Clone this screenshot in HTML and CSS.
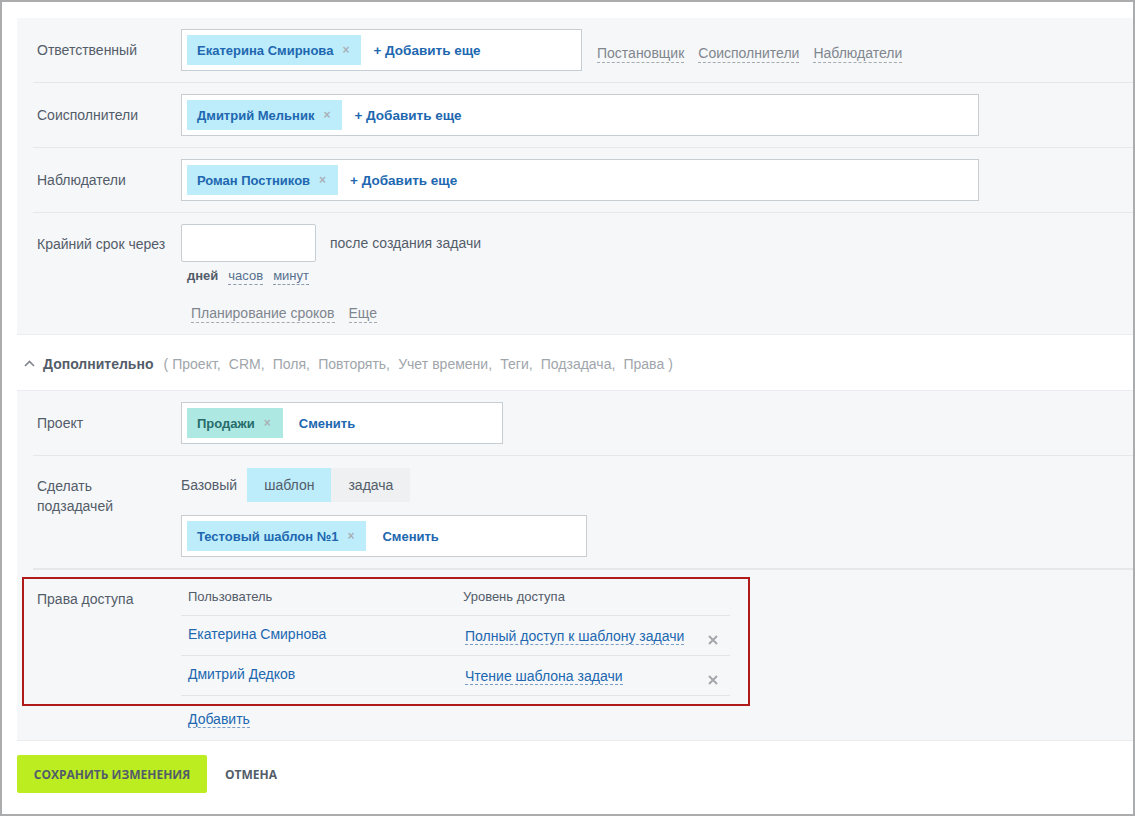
FILE: index.html
```html
<!DOCTYPE html>
<html lang="ru">
<head>
<meta charset="utf-8">
<title>Шаблон задачи</title>
<link rel="stylesheet" href="styles.css">
</head>
<body>
<div class="frame">
  <div class="panel">
    <div class="row">
      <div class="label">Ответственный</div>
      <div class="picker w400">
        <span class="tag">Екатерина Смирнова<span class="tag-x">×</span></span>
        <span class="add">+ Добавить еще</span>
      </div>
      <div class="role-links">
        <span class="dlink">Постановщик</span>
        <span class="dlink">Соисполнители</span>
        <span class="dlink">Наблюдатели</span>
      </div>
    </div>
    <div class="row">
      <div class="label">Соисполнители</div>
      <div class="picker w797">
        <span class="tag">Дмитрий Мельник<span class="tag-x">×</span></span>
        <span class="add">+ Добавить еще</span>
      </div>
    </div>
    <div class="row">
      <div class="label">Наблюдатели</div>
      <div class="picker w797">
        <span class="tag">Роман Постников<span class="tag-x">×</span></span>
        <span class="add">+ Добавить еще</span>
      </div>
    </div>
    <div class="row row-deadline">
      <div class="label label-deadline">Крайний срок через</div>
      <div class="deadline">
        <div class="deadline-line">
          <div class="num-input"></div>
          <span class="after">после создания задачи</span>
        </div>
        <div class="units">
          <span class="unit-active">дней</span>
          <span class="unit">часов</span>
          <span class="unit">минут</span>
        </div>
        <div class="plan-links">
          <span class="dlink">Планирование сроков</span>
          <span class="dlink">Еще</span>
        </div>
      </div>
    </div>
  </div>

  <div class="more-header">
    <svg class="chev" width="11" height="7" viewBox="0 0 11 7"><path d="M1 6 L5.5 1.5 L10 6" fill="none" stroke="#80868e" stroke-width="1.6"/></svg>
    <span class="more-title">Дополнительно</span>
    <span class="more-list">( Проект,&nbsp; CRM,&nbsp; Поля,&nbsp; Повторять,&nbsp; Учет времени,&nbsp; Теги,&nbsp; Подзадача,&nbsp; Права )</span>
  </div>

  <div class="panel panel2">
    <div class="row">
      <div class="label">Проект</div>
      <div class="picker w321">
        <span class="tag tag-teal">Продажи<span class="tag-x">×</span></span>
        <span class="change">Сменить</span>
      </div>
    </div>
    <div class="row row-sub">
      <div class="label label-sub">Сделать<br>подзадачей</div>
      <div class="sub">
        <div class="switch">
          <span class="switch-label">Базовый</span>
          <span class="seg seg-on">шаблон</span>
          <span class="seg">задача</span>
        </div>
        <div class="picker w405">
          <span class="tag">Тестовый шаблон №1<span class="tag-x">×</span></span>
          <span class="change">Сменить</span>
        </div>
      </div>
    </div>
    <div class="rights">
      <div class="rights-box">
        <div class="rights-label">Права доступа</div>
        <div class="rights-table">
          <div class="rt-row rt-head">
            <span class="rt-user">Пользователь</span>
            <span class="rt-level">Уровень доступа</span>
          </div>
          <div class="rt-row">
            <span class="rt-user user-link">Екатерина Смирнова</span>
            <span class="rt-level"><span class="level-link">Полный доступ к шаблону задачи</span></span>
            <svg class="rt-del" width="10" height="10" viewBox="0 0 10 10"><path d="M1 1 L9 9 M9 1 L1 9" stroke="#a3a8ae" stroke-width="2"/></svg>
          </div>
          <div class="rt-row">
            <span class="rt-user user-link">Дмитрий Дедков</span>
            <span class="rt-level"><span class="level-link">Чтение шаблона задачи</span></span>
            <svg class="rt-del" width="10" height="10" viewBox="0 0 10 10"><path d="M1 1 L9 9 M9 1 L1 9" stroke="#a3a8ae" stroke-width="2"/></svg>
          </div>
        </div>
      </div>
      <div class="rights-add"><span class="level-link">Добавить</span></div>
    </div>
  </div>

  <div class="footer">
    <span class="btn-save">СОХРАНИТЬ ИЗМЕНЕНИЯ</span>
    <span class="btn-cancel">ОТМЕНА</span>
  </div>
</div>
</body>
</html>
```

FILE: styles.css
```css
* { box-sizing: border-box; }
html, body { margin: 0; padding: 0; background: #fff; }
body { font-family: "Liberation Sans", Arial, sans-serif; font-size: 14px; color: #535c69; }

.frame {
  width: 1135px;
  height: 816px;
  border: 2px solid #aaacae;
  padding: 16px 0 0 15px;
  background: #fff;
  overflow: hidden;
}

.panel {
  background: #f6f7f9;
  border-bottom: 1px solid #eaecef;
}
.panel2 { border-top: 1px solid #eaecef; }

.row {
  display: flex;
  align-items: flex-start;
  margin-left: 16px;
  padding: 11px 0;
  border-bottom: 1px solid #e5e8eb;
}
.panel > .row:last-child { border-bottom: none; }

.label {
  width: 148px;
  flex: none;
  padding-left: 4px;
  padding-top: 11px;
  line-height: 20px;
  font-size: 14px;
  color: #535c69;
}

.picker {
  height: 42px;
  border: 1px solid #c6cdd3;
  background: #fff;
  padding: 5px;
  display: flex;
  align-items: center;
  flex: none;
}
.w400 { width: 401px; }
.w797 { width: 798px; }
.w321 { width: 322px; }
.w405 { width: 406px; }

.tag {
  height: 30px;
  display: inline-flex;
  align-items: center;
  padding: 0 12px 0 10px;
  background: #bdedfb;
  color: #2067b0;
  font-weight: bold;
  font-size: 13px;
}
.tag-teal { background: #aee8e3; color: #276c6b; }
.tag-x {
  margin-left: 9px;
  color: #a9b1b8;
  font-size: 12px;
  font-weight: bold;
}
.add {
  margin-left: 12px;
  color: #2067b0;
  font-weight: bold;
  font-size: 13.5px;
}
.change {
  margin-left: 16px;
  color: #2067b0;
  font-weight: bold;
  font-size: 13px;
}

.role-links {
  margin-left: 15px;
  padding-top: 16px;
  display: flex;
  gap: 14px;
}
.dlink {
  color: #80868e;
  font-size: 14px;
  line-height: 17px;
  border-bottom: 1px dashed #a5aab0;
}

.label-deadline { padding-top: 10px; }
.deadline { display: flex; flex-direction: column; }
.deadline-line { display: flex; align-items: center; }
.num-input {
  width: 135px;
  height: 38px;
  border: 1px solid #c6cdd3;
  background: #fff;
  border-radius: 2px;
}
.after { margin-left: 14px; font-size: 14px; color: #535c69; }
.units {
  display: flex;
  gap: 10px;
  margin-top: 6px;
  padding-left: 6px;
  line-height: 16px;
}
.unit-active { font-weight: bold; font-size: 13px; color: #535c69; }
.unit {
  font-size: 13px;
  color: #56708f;
  border-bottom: 1px dashed #8c9bb0;
}
.plan-links {
  display: flex;
  gap: 14px;
  margin-top: 20px;
  padding-left: 10px;
}

.more-header {
  height: 55px;
  display: flex;
  align-items: center;
  padding: 3px 0 0 7px;
}
.chev { margin-right: 8px; margin-top: -2px; }
.more-title { font-weight: bold; font-size: 14px; color: #535c69; }
.more-list { margin-left: 10px; font-size: 14px; color: #a0a5ab; word-spacing: 0.2px; }

.row-sub { padding-top: 12px; }
.label-sub { padding-top: 8px; }
.sub { display: flex; flex-direction: column; gap: 13px; }
.switch { display: flex; align-items: center; height: 34px; }
.switch-label { margin-right: 10px; font-size: 14px; color: #535c69; }
.seg {
  height: 34px;
  display: inline-flex;
  align-items: center;
  padding: 0 17px;
  background: #eef0f1;
  font-size: 14px;
  color: #535c69;
}
.seg-on { background: #bdedfb; }

.rights { padding-top: 7px; padding-bottom: 12px; border-top: 1px solid #e5e8eb; margin-left: 16px; }
.rights-box {
  margin-left: -11px;
  width: 728px;
  border: 2px solid #b01a1a;
  display: flex;
  padding: 0 18px 8px 13px;
}
.rights-label { width: 144px; flex: none; padding-top: 12px; line-height: 16px; font-size: 14px; }
.rights-table { flex: 1; }
.rt-row {
  display: flex;
  align-items: center;
  height: 40px;
  border-bottom: 1px solid #e2e5e8;
}
.rt-head { height: 37px; }
.rt-user { width: 275px; flex: none; padding-left: 7px; font-size: 14px; }
.rt-head .rt-user, .rt-head .rt-level { font-size: 13px; color: #535c69; margin-top: -1px; }
.rt-level { flex: 1; padding-left: 9px; }
.rt-head .rt-level { padding-left: 7px; }
.user-link { color: #2067b0; font-size: 14px; margin-top: -3px; }
.level-link {
  color: #2067b0;
  font-size: 14px;
  line-height: 17px;
  border-bottom: 1px dashed #7b9cc4;
}
.rt-row .level-link { position: relative; top: 1px; }
.rt-del { margin-right: 12px; margin-top: 9px; }
.rights-add { padding-left: 171px; margin-left: -16px; margin-top: 5px; line-height: 17px; }

.footer {
  display: flex;
  align-items: center;
  margin-top: 14px;
}
.btn-save {
  height: 38px;
  width: 190px;
  display: inline-flex;
  align-items: center;
  justify-content: center;
  background: #bbed21;
  border-radius: 2px;
  font-family: "Open Sans", sans-serif;
  font-weight: bold;
  font-size: 12px;
  color: #535c69;
}
.btn-cancel {
  margin-left: 18px;
  font-family: "Open Sans", sans-serif;
  font-weight: bold;
  font-size: 12px;
  color: #535c69;
}
```
